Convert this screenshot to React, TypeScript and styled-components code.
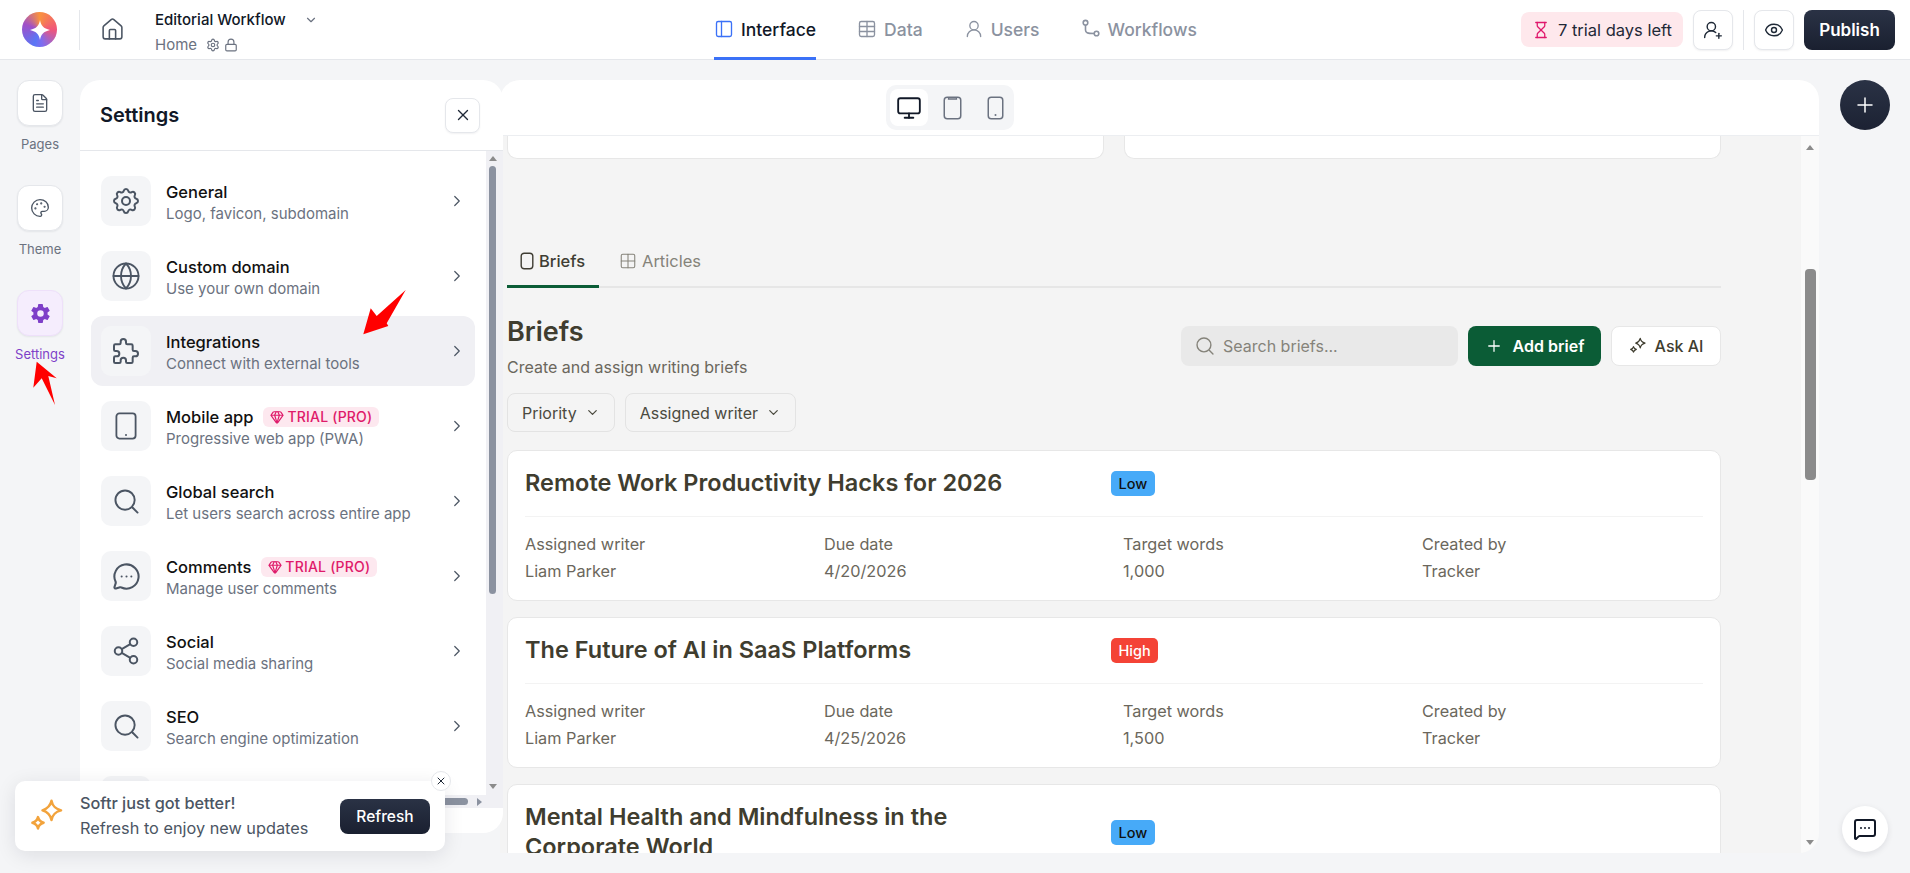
import { ReactNode } from 'react';
import styled, { createGlobalStyle } from 'styled-components';
import {
  ChevronDown, ChevronRight, Eye, FileText, Gem, Globe, Grid2x2, Hourglass, House, Lock,
  MessageCircleMore, MessageSquareMore, Monitor, PanelLeft, Palette, Plus, Settings as Gear,
  Share2, Table, UserRound, UserRoundPlus, X,
} from 'lucide-react';
import { IoSettingsSharp } from 'react-icons/io5';
import { TbPuzzle, TbSettings } from 'react-icons/tb';

const GlobalStyle = createGlobalStyle`
  html, body { margin: 0; height: 100%; overflow: hidden; background: #f4f5f7; }
  body { font-family: Inter, "Liberation Sans", sans-serif; color: #111827; }
  * { box-sizing: border-box; }
`;

const Sparkles = ({ size, color, width }: { size: number; color: string; width: number }) => (
  <svg width={size} height={size} viewBox="0 0 32 32" fill="none" stroke={color} strokeWidth={width} strokeLinejoin="round">
    <path d="M20 2.5c.9 4.6 3 6.8 8.5 8.5-5.5 1.5-7.6 3.8-8.5 8.5-1-4.7-3-7-8-8.5 5-1.7 7-3.9 8-8.5z" />
    <path d="M8 17c.6 2.8 1.8 4 5 5-3.2 1-4.4 2.2-5 5-.6-2.8-1.8-4-5-5 3.2-1 4.4-2.2 5-5z" />
  </svg>
);

const WorkflowIcon = () => (
  <svg width="20" height="20" viewBox="0 0 20 20" fill="none" stroke="currentColor" strokeWidth="1.6">
    <circle cx="4.5" cy="3.7" r="2.3" />
    <circle cx="15.5" cy="14.5" r="2.3" />
    <path d="M4.5 6v5c0 2.5 1.5 3.5 8.7 3.5" />
  </svg>
);

const SearchGlyph = ({ size, width }: { size: number; width: number }) => (
  <svg width={size} height={size} viewBox="0 0 26 26" fill="none" stroke="currentColor" strokeWidth={width} strokeLinecap="round">
    <circle cx="11.5" cy="11.5" r="10" />
    <path d="M19.5 19.5l5 5" />
  </svg>
);

const DeviceIcon = ({ w, h, kind, color, stroke }: { w: number; h: number; kind: 'dot' | 'notch' | 'plain'; color: string; stroke: number }) => (
  <svg width={w} height={h} viewBox={`0 0 ${w} ${h}`} fill="none" stroke={color} strokeWidth={stroke}>
    <rect x={stroke / 2 + 0.5} y={stroke / 2 + 0.5} width={w - stroke - 1} height={h - stroke - 1} rx="3" />
    {kind === 'dot' && <circle cx={w / 2} cy={h - 5} r="1" fill={color} stroke="none" />}
    {kind === 'notch' && <path d={`M${w / 2 - 4} 1v2h8v-2`} strokeWidth="1.3" />}
  </svg>
);

const Page = styled.div`
  position: relative;
  width: 1910px;
  height: 873px;
  overflow: hidden;
  display: flex;
  flex-direction: column;
`;

const TopBar = styled.header`
  height: 60px;
  flex: none;
  display: flex;
  align-items: center;
  background: #fff;
  border-bottom: 1px solid #e5e7eb;
  padding-right: 15px;
`;

const TopLeft = styled.div`
  width: 714px;
  height: 100%;
  display: flex;
  align-items: center;
`;

const LogoSlot = styled.div`
  width: 80px;
  height: 40px;
  display: flex;
  align-items: center;
  justify-content: center;
  border-right: 1px solid #e5e7eb;
`;

const Logo = styled.div`
  width: 35px;
  height: 35px;
  border-radius: 50%;
  display: flex;
  align-items: center;
  justify-content: center;
  background: conic-gradient(from 0deg, #f9923f, #f0567a 90deg, #7d6cf0 170deg, #5a76f5 200deg, #a04fc8 290deg, #f9923f);
`;

const HomeSlot = styled.div`
  width: 65px;
  padding-left: 20px;
  color: #4b5563;
  display: flex;
`;

const ProjectInfo = styled.div`
  margin: 5px 0 0 10px;
  display: flex;
  flex-direction: column;
  gap: 7px;
`;

const ProjectName = styled.div`
  display: flex;
  align-items: center;
  gap: 18px;
  font-size: 15px;
  font-weight: 500;
  line-height: 18px;
  color: #111827;
  svg { color: #6b7280; }
`;

const ProjectSub = styled.div`
  display: flex;
  align-items: center;
  gap: 4px;
  font-size: 15px;
  line-height: 18px;
  color: #6b7280;
  span { margin-right: 5px; }
`;

const Nav = styled.nav`
  display: flex;
  height: 100%;
  gap: 41px;
`;

const NavItem = styled.div<{ $active?: boolean }>`
  display: flex;
  align-items: center;
  gap: 7px;
  height: 60px;
  font-size: 17.5px;
  font-weight: 500;
  color: ${(p) => (p.$active ? '#111827' : '#8b92a0')};
  border-bottom: 3px solid ${(p) => (p.$active ? '#3b71f7' : 'transparent')};
  padding-top: 1px;
  svg { color: ${(p) => (p.$active ? '#3b71f7' : '#8b92a0')}; }
`;

const TopRight = styled.div`
  margin-left: auto;
  display: flex;
  align-items: center;
`;

const TrialBadge = styled.div`
  height: 35px;
  width: 162px;
  display: flex;
  align-items: center;
  justify-content: center;
  gap: 8px;
  border-radius: 8px;
  background: #fee8ec;
  font-size: 16.5px;
  color: #1f2937;
  svg { color: #e0186c; flex: none; }
`;

const IconButton = styled.button`
  width: 40px;
  height: 40px;
  padding: 0;
  display: flex;
  align-items: center;
  justify-content: center;
  background: #fff;
  border: 1px solid #e5e7eb;
  border-radius: 8px;
  box-shadow: 0 1px 2px rgba(17, 24, 39, 0.06);
  color: #1f2937;
`;

const AddUser = styled(IconButton)`
  margin-left: 10px;
`;

const Rule = styled.div`
  width: 1px;
  height: 40px;
  margin: 0 10px;
  background: #e5e7eb;
`;

const PublishButton = styled.button`
  width: 91px;
  height: 40px;
  margin-left: 10px;
  border: none;
  border-radius: 8px;
  background: linear-gradient(#2a3245, #1a2030);
  color: #fff;
  font: 600 17px Inter, sans-serif;
`;

const Body = styled.main`
  flex: 1;
  min-height: 0;
  display: flex;
  padding: 20px 0;
`;

const Rail = styled.aside`
  width: 80px;
  flex: none;
  display: flex;
  flex-direction: column;
  align-items: center;
  gap: 32px;
`;

const RailItem = styled.div<{ $active?: boolean }>`
  display: flex;
  flex-direction: column;
  align-items: center;
  gap: 9px;
  font-size: 13px;
  line-height: 18px;
  color: ${(p) => (p.$active ? '#7e3fc8' : '#6b7280')};
`;

const RailButton = styled.div<{ $active?: boolean }>`
  width: 46px;
  height: 46px;
  display: flex;
  align-items: center;
  justify-content: center;
  border-radius: 12px;
  background: ${(p) => (p.$active ? '#f5edfd' : '#fff')};
  border: 1px solid ${(p) => (p.$active ? '#eee0fa' : '#e5e7eb')};
  box-shadow: 0 1px 2px rgba(17, 24, 39, 0.07);
  color: ${(p) => (p.$active ? '#7e3fc8' : '#4b5563')};
`;

const SettingsPanel = styled.section`
  width: 423px;
  height: 753px;
  flex: none;
  margin-right: -3px;
  position: relative;
  z-index: 1;
  display: flex;
  flex-direction: column;
  background: #fff;
  border-radius: 20px;
  overflow: hidden;
`;

const PanelHead = styled.div`
  height: 71px;
  flex: none;
  display: flex;
  align-items: center;
  justify-content: space-between;
  padding: 0 23px 0 20px;
  border-bottom: 1px solid #e5e7eb;
`;

const PanelTitle = styled.h2`
  margin: 0;
  font-size: 20px;
  font-weight: 600;
  color: #111827;
`;

const CloseButton = styled(IconButton)`
  width: 35px;
  height: 35px;
`;

const PanelMiddle = styled.div`
  flex: 1;
  min-height: 0;
  display: flex;
`;

const RowList = styled.div`
  flex: 1;
  min-width: 0;
  overflow: hidden;
  padding: 15px 11px 0;
  display: flex;
  flex-direction: column;
  gap: 5px;
`;

const Row = styled.div<{ $hover?: boolean }>`
  height: 70px;
  flex: none;
  display: flex;
  align-items: center;
  gap: 15px;
  padding: 0 9px 0 10px;
  border-radius: 12px;
  background: ${(p) => (p.$hover ? '#f0f0f4' : 'transparent')};
`;

const RowIcon = styled.div`
  width: 50px;
  height: 50px;
  flex: none;
  display: flex;
  align-items: center;
  justify-content: center;
  border-radius: 10px;
  background: #f4f5f7;
  color: #4b5563;
`;

const RowText = styled.div`
  flex: 1;
  min-width: 0;
  padding-top: 3px;
`;

const RowTitle = styled.div`
  display: flex;
  align-items: center;
  gap: 10px;
  height: 22px;
  font-size: 16.5px;
  font-weight: 500;
  color: #111;
`;

const RowSub = styled.div`
  font-size: 15px;
  line-height: 22px;
  color: #6b7280;
`;

const ProTag = styled.span`
  display: inline-flex;
  align-items: center;
  gap: 3px;
  height: 20px;
  padding: 0 7px;
  border-radius: 6px;
  background: #fde8ef;
  color: #df1a6a;
  font-size: 14px;
  font-weight: 500;
  letter-spacing: 0.2px;
`;

const RowChevron = styled(ChevronRight)`
  color: #4b5563;
  flex: none;
`;

const VTrack = styled.div<{ $w: number; $bg: string }>`
  width: ${(p) => p.$w}px;
  flex: none;
  display: flex;
  flex-direction: column;
  align-items: center;
  background: ${(p) => p.$bg};
`;

const PanelTrack = styled(VTrack)`
  padding-right: 4px;
`;

const Arrow = styled.div<{ $dir: 'up' | 'down' | 'right'; $gap?: number }>`
  width: 0;
  height: 0;
  flex: none;
  border: 4px solid transparent;
  ${(p) => (p.$dir === 'up' ? `border-top: none; border-bottom: 5px solid #8b8b8b; margin-top: ${p.$gap ?? 0}px;` : '')}
  ${(p) => (p.$dir === 'down' ? `border-bottom: none; border-top: 5px solid #8b8b8b; margin-bottom: ${p.$gap ?? 0}px;` : '')}
  ${(p) => (p.$dir === 'right' ? 'border-right: none; border-left: 5px solid #8b92a0;' : '')}
`;

const VThumb = styled.div<{ $w: number; $h: number; $top: number; $bg: string }>`
  width: ${(p) => p.$w}px;
  height: ${(p) => p.$h}px;
  margin-top: ${(p) => p.$top}px;
  margin-bottom: auto;
  border-radius: 4px;
  background: ${(p) => p.$bg};
`;

const HScroll = styled.div`
  height: 13px;
  flex: none;
  display: flex;
  align-items: center;
  justify-content: flex-end;
  gap: 9px;
  padding-right: 21px;
  background: #f0f0f4;
`;

const HThumb = styled.div`
  width: 40px;
  height: 7px;
  border-radius: 4px;
  background: #8b92a0;
`;

const PanelFoot = styled.div`
  height: 25px;
  flex: none;
`;

const Canvas = styled.section`
  width: 1319px;
  flex: none;
  display: flex;
  flex-direction: column;
  border-radius: 20px 20px 20px 0;
  overflow: hidden;
  background: #f4f4f4;
`;

const CanvasHead = styled.div`
  height: 56px;
  flex: none;
  display: flex;
  align-items: center;
  padding-left: 386px;
  background: #fff;
  border-bottom: 1px solid #eceef1;
`;

const DeviceSwitch = styled.div`
  width: 128px;
  height: 45px;
  display: flex;
  align-items: center;
  padding: 4px;
  gap: 5px;
  border-radius: 10px;
  background: #f4f5f7;
`;

const DeviceButton = styled.div<{ $active?: boolean }>`
  width: 38px;
  height: 37px;
  flex: none;
  display: flex;
  align-items: center;
  justify-content: center;
  border-radius: 8px;
  background: ${(p) => (p.$active ? '#fff' : 'transparent')};
  color: #1f2937;
`;

const CanvasBody = styled.div`
  flex: 1;
  min-height: 0;
  display: flex;
`;

const Content = styled.div`
  flex: 1;
  min-width: 0;
  overflow: hidden;
  padding: 0 80px 0 7px;
`;

const TopCards = styled.div`
  display: grid;
  grid-template-columns: 1fr 1fr;
  gap: 20px;
`;

const TopCard = styled.div`
  height: 23px;
  background: #fff;
  border: 1px solid #e7e7e7;
  border-top: none;
  border-radius: 0 0 10px 10px;
`;

const Tabs = styled.div`
  margin-top: 86px;
  display: flex;
  gap: 7px;
  height: 43px;
  border-bottom: 2px solid #e6e6e6;
`;

const Tab = styled.div<{ $active?: boolean }>`
  height: 43px;
  display: flex;
  align-items: center;
  gap: 5px;
  padding: 0 13px 9px;
  width: ${(p) => (p.$active ? '92px' : 'auto')};
  font-size: 16.5px;
  font-weight: ${(p) => (p.$active ? 500 : 400)};
  color: ${(p) => (p.$active ? '#3f3d33' : '#85837a')};
  border-bottom: 3px solid ${(p) => (p.$active ? '#0b5c36' : 'transparent')};
`;

const ListHead = styled.div`
  margin-top: 27px;
  display: flex;
  justify-content: space-between;
`;

const Heading = styled.h1`
  margin: 0;
  font-size: 27px;
  line-height: 34px;
  font-weight: 600;
  color: #3f3d2f;
`;

const Subheading = styled.p`
  margin: 8px 0 0;
  font-size: 16px;
  line-height: 20px;
  color: #6b675c;
`;

const Actions = styled.div`
  margin-top: 11px;
  display: flex;
  gap: 10px;
`;

const SearchField = styled.div`
  width: 277px;
  height: 40px;
  display: flex;
  align-items: center;
  gap: 9px;
  padding: 0 15px;
  border-radius: 8px;
  background: #e9e9e9;
  font-size: 16px;
  color: #85837a;
`;

const AddButton = styled.div`
  width: 133px;
  height: 40px;
  display: flex;
  align-items: center;
  justify-content: center;
  gap: 10px;
  border-radius: 8px;
  background: #0b5c36;
  color: #fff;
  font-size: 16px;
  font-weight: 600;
`;

const AskButton = styled.div`
  width: 110px;
  height: 40px;
  display: flex;
  align-items: center;
  justify-content: center;
  gap: 8px;
  border-radius: 8px;
  background: #fff;
  border: 1px solid #e7e7e7;
  color: #3f3d2f;
  font-size: 16px;
  font-weight: 500;
`;

const Filters = styled.div`
  margin-top: 16px;
  display: flex;
  gap: 10px;
`;

const FilterButton = styled.div`
  height: 39px;
  display: flex;
  align-items: center;
  gap: 8px;
  padding: 0 14px;
  border: 1px solid #e3e3e3;
  border-radius: 8px;
  font-size: 16px;
  color: #4b4a3f;
`;

const CardList = styled.div`
  margin-top: 18px;
  display: flex;
  flex-direction: column;
  gap: 16px;
`;

const Card = styled.article`
  background: #fff;
  border: 1px solid #e7e7e7;
  border-radius: 10px;
  padding: 0 17px;
`;

const CardTop = styled.div`
  display: flex;
  align-items: center;
  border-bottom: 1px solid #f3f3f3;
  padding: 17px 0 18px;
`;

const CardTitle = styled.h3`
  margin: 0;
  width: 586px;
  padding-right: 50px;
  flex: none;
  font-size: 23.5px;
  line-height: 30px;
  font-weight: 600;
  color: #3f3d2f;
`;

const Priority = styled.span<{ $tone: 'low' | 'high' }>`
  height: 25px;
  padding: 0 7.5px;
  display: flex;
  align-items: center;
  border-radius: 5px;
  font-size: 14.5px;
  font-weight: 500;
  background: ${(p) => (p.$tone === 'low' ? '#47aaf8' : '#f44336')};
  color: ${(p) => (p.$tone === 'low' ? '#111' : '#fff')};
`;

const Fields = styled.dl`
  margin: 0;
  height: 83px;
  padding-top: 16px;
  display: grid;
  grid-template-columns: repeat(4, 299px);
`;

const FieldName = styled.dt`
  font-size: 16.25px;
  line-height: 22px;
  color: #6b675c;
`;

const FieldValue = styled.dd`
  margin: 5px 0 0;
  font-size: 16.25px;
  line-height: 22px;
  color: #6b675c;
`;

const SideColumn = styled.div`
  flex: 1;
  display: flex;
  flex-direction: column;
  align-items: center;
  justify-content: space-between;
  padding-bottom: 1px;
`;

const AddFab = styled.div`
  width: 50px;
  height: 50px;
  display: flex;
  align-items: center;
  justify-content: center;
  border-radius: 50%;
  background: linear-gradient(#2a3245, #1c2233);
  color: #fff;
`;

const ChatFab = styled.div`
  width: 46px;
  height: 46px;
  display: flex;
  align-items: center;
  justify-content: center;
  border-radius: 50%;
  background: #fff;
  color: #111827;
  box-shadow: 0 2px 6px rgba(17, 24, 39, 0.1);
`;

const Toast = styled.div`
  position: absolute;
  left: 15px;
  bottom: 22px;
  z-index: 3;
  width: 430px;
  height: 70px;
  display: flex;
  align-items: center;
  padding: 0 15px 0 14px;
  border-radius: 10px;
  background: #fff;
  box-shadow: 0 4px 20px rgba(17, 24, 39, 0.1);
`;

const ToastText = styled.div`
  margin-left: 15px;
  flex: 1;
  font-size: 16.3px;
  line-height: 25px;
  color: #4b5563;
  b { font-weight: 500; display: block; }
`;

const RefreshButton = styled.div`
  width: 90px;
  height: 35px;
  flex: none;
  display: flex;
  align-items: center;
  justify-content: center;
  border-radius: 8px;
  background: linear-gradient(#2a3245, #1a2030);
  color: #fff;
  font-size: 15.5px;
  font-weight: 500;
`;

const ToastClose = styled.div`
  position: absolute;
  top: -10px;
  right: -6px;
  width: 20px;
  height: 20px;
  display: flex;
  align-items: center;
  justify-content: center;
  border-radius: 50%;
  background: #fff;
  border: 1px solid #e5e7eb;
  color: #1f2937;
`;

const Annotation = styled.svg<{ $left: number; $top: number }>`
  position: absolute;
  left: ${(p) => p.$left}px;
  top: ${(p) => p.$top}px;
  z-index: 2;
`;

const rows: { icon: ReactNode; title?: string; sub?: string; pro?: boolean; hover?: boolean }[] = [
  { icon: <TbSettings size={32} strokeWidth={1.5} />, title: 'General', sub: 'Logo, favicon, subdomain' },
  { icon: <Globe size={30} strokeWidth={1.5} />, title: 'Custom domain', sub: 'Use your own domain' },
  { icon: <TbPuzzle size={32} strokeWidth={1.5} />, title: 'Integrations', sub: 'Connect with external tools', hover: true },
  { icon: <DeviceIcon w={22} h={28} kind="dot" color="#4b5563" stroke={1.8} />, title: 'Mobile app', sub: 'Progressive web app (PWA)', pro: true },
  { icon: <SearchGlyph size={25} width={2} />, title: 'Global search', sub: 'Let users search across entire app' },
  { icon: <MessageCircleMore size={29} strokeWidth={1.7} />, title: 'Comments', sub: 'Manage user comments', pro: true },
  { icon: <Share2 size={30} strokeWidth={1.6} />, title: 'Social', sub: 'Social media sharing' },
  { icon: <SearchGlyph size={25} width={2} />, title: 'SEO', sub: 'Search engine optimization' },
  { icon: null },
];

const briefs: { title: string; tone: 'low' | 'high'; due?: string; words?: string }[] = [
  { title: 'Remote Work Productivity Hacks for 2026', tone: 'low', due: '4/20/2026', words: '1,000' },
  { title: 'The Future of AI in SaaS Platforms', tone: 'high', due: '4/25/2026', words: '1,500' },
  { title: 'Mental Health and Mindfulness in the Corporate World', tone: 'low' },
];

export default function App() {
  return (
    <Page>
      <GlobalStyle />
      <TopBar>
        <TopLeft>
          <LogoSlot>
            <Logo>
              <svg width="20" height="20" viewBox="0 0 20 20" fill="#fff">
                <path d="M10 0c1 5.5 3.5 8.5 10 10-6.5 1.5-9 4.5-10 10-1-5.5-3.5-8.5-10-10 6.5-1.5 9-4.5 10-10z" />
              </svg>
            </Logo>
          </LogoSlot>
          <HomeSlot><House size={25} strokeWidth={1.5} /></HomeSlot>
          <ProjectInfo>
            <ProjectName>Editorial Workflow <ChevronDown size={14} /></ProjectName>
            <ProjectSub><span>Home</span><Gear size={14} /><Lock size={14} /></ProjectSub>
          </ProjectInfo>
        </TopLeft>
        <Nav>
          <NavItem $active><PanelLeft size={20} strokeWidth={1.6} />Interface</NavItem>
          <NavItem><Table size={20} strokeWidth={1.6} />Data</NavItem>
          <NavItem><UserRound size={20} strokeWidth={1.6} />Users</NavItem>
          <NavItem><WorkflowIcon />Workflows</NavItem>
        </Nav>
        <TopRight>
          <TrialBadge><Hourglass size={18} strokeWidth={1.7} />7 trial days left</TrialBadge>
          <AddUser><UserRoundPlus size={20} strokeWidth={1.7} /></AddUser>
          <Rule />
          <IconButton><Eye size={20} strokeWidth={1.7} /></IconButton>
          <PublishButton>Publish</PublishButton>
        </TopRight>
      </TopBar>

      <Body>
        <Rail>
          <RailItem><RailButton><FileText size={20} strokeWidth={1.6} /></RailButton>Pages</RailItem>
          <RailItem><RailButton><Palette size={20} strokeWidth={1.6} /></RailButton>Theme</RailItem>
          <RailItem $active><RailButton $active><IoSettingsSharp size={21} /></RailButton>Settings</RailItem>
        </Rail>

        <SettingsPanel>
          <PanelHead>
            <PanelTitle>Settings</PanelTitle>
            <CloseButton><X size={18} strokeWidth={1.8} /></CloseButton>
          </PanelHead>
          <PanelMiddle>
            <RowList>
              {rows.map((row, index) => (
                <Row key={index} $hover={row.hover}>
                  <RowIcon>{row.icon}</RowIcon>
                  {row.title && (
                    <>
                      <RowText>
                        <RowTitle>
                          {row.title}
                          {row.pro && <ProTag><Gem size={14} strokeWidth={2} />TRIAL (PRO)</ProTag>}
                        </RowTitle>
                        <RowSub>{row.sub}</RowSub>
                      </RowText>
                      <RowChevron size={18} strokeWidth={1.6} />
                    </>
                  )}
                </Row>
              ))}
            </RowList>
            <PanelTrack $w={17} $bg="#f0f0f4">
              <Arrow $dir="up" $gap={5} />
              <VThumb $w={7} $h={428} $top={5} $bg="#8b92a0" />
              <Arrow $dir="down" $gap={6} />
            </PanelTrack>
          </PanelMiddle>
          <HScroll><HThumb /><Arrow $dir="right" /></HScroll>
          <PanelFoot />
        </SettingsPanel>

        <Canvas>
          <CanvasHead>
            <DeviceSwitch>
              <DeviceButton $active><Monitor size={26} strokeWidth={1.7} color="#111827" /></DeviceButton>
              <DeviceButton><DeviceIcon w={19} h={24} kind="notch" color="#6b7280" stroke={1.5} /></DeviceButton>
              <DeviceButton><DeviceIcon w={17} h={24} kind="dot" color="#6b7280" stroke={1.5} /></DeviceButton>
            </DeviceSwitch>
          </CanvasHead>
          <CanvasBody>
            <Content>
              <TopCards><TopCard /><TopCard /></TopCards>
              <Tabs>
                <Tab $active><DeviceIcon w={14} h={18} kind="plain" color="#3f3d33" stroke={1.4} />Briefs</Tab>
                <Tab><Grid2x2 size={18} strokeWidth={1.4} />Articles</Tab>
              </Tabs>
              <ListHead>
                <div>
                  <Heading>Briefs</Heading>
                  <Subheading>Create and assign writing briefs</Subheading>
                </div>
                <Actions>
                  <SearchField><SearchGlyph size={18} width={2} />Search briefs...</SearchField>
                  <AddButton><Plus size={18} strokeWidth={1.7} />Add brief</AddButton>
                  <AskButton><Sparkles size={18} color="#3f3d2f" width={2.2} />Ask AI</AskButton>
                </Actions>
              </ListHead>
              <Filters>
                <FilterButton>Priority <ChevronDown size={15} /></FilterButton>
                <FilterButton>Assigned writer <ChevronDown size={15} /></FilterButton>
              </Filters>
              <CardList>
                {briefs.map((brief) => (
                  <Card key={brief.title}>
                    <CardTop>
                      <CardTitle>{brief.title}</CardTitle>
                      <Priority $tone={brief.tone}>{brief.tone === 'low' ? 'Low' : 'High'}</Priority>
                    </CardTop>
                    {brief.due && (
                      <Fields>
                        <div><FieldName>Assigned writer</FieldName><FieldValue>Liam Parker</FieldValue></div>
                        <div><FieldName>Due date</FieldName><FieldValue>{brief.due}</FieldValue></div>
                        <div><FieldName>Target words</FieldName><FieldValue>{brief.words}</FieldValue></div>
                        <div><FieldName>Created by</FieldName><FieldValue>Tracker</FieldValue></div>
                      </Fields>
                    )}
                  </Card>
                ))}
              </CardList>
            </Content>
            <VTrack $w={18} $bg="#fafafa">
              <Arrow $dir="up" $gap={9} />
              <VThumb $w={11} $h={211} $top={119} $bg="#8b8b8b" />
              <Arrow $dir="down" $gap={8} />
            </VTrack>
          </CanvasBody>
        </Canvas>

        <SideColumn>
          <AddFab><Plus size={24} strokeWidth={1.5} /></AddFab>
          <ChatFab><MessageSquareMore size={24} strokeWidth={2} /></ChatFab>
        </SideColumn>
      </Body>

      <Toast>
        <Sparkles size={36} color="#f2a33c" width={2.2} />
        <ToastText><b>Softr just got better!</b>Refresh to enjoy new updates</ToastText>
        <RefreshButton>Refresh</RefreshButton>
        <ToastClose><X size={12} strokeWidth={2} /></ToastClose>
      </Toast>

      <Annotation $left={30} $top={360} width="30" height="48" viewBox="0 0 30 48">
        <path fill="#ff0000" d="M6.7 1.7 26.7 18.3 18.3 16 25 45 11.7 18.3 3.3 27.7z" />
      </Annotation>
      <Annotation $left={360} $top={288} width="48" height="48" viewBox="0 0 48 48">
        <path fill="#ff0000" d="M3.3 46.3 10.7 20.3 16.7 28 45.7 2 26.7 35.3 28.3 38z" />
      </Annotation>
    </Page>
  );
}
